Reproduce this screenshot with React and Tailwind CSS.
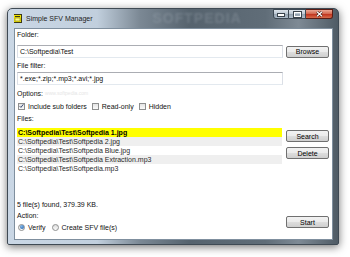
import React from "react";

const files = [
  "C:\\Softpedia\\Test\\Softpedia 1.jpg",
  "C:\\Softpedia\\Test\\Softpedia 2.jpg",
  "C:\\Softpedia\\Test\\Softpedia Blue.jpg",
  "C:\\Softpedia\\Test\\Softpedia Extraction.mp3",
  "C:\\Softpedia\\Test\\Softpedia.mp3",
];

const Btn = ({ children, className = "" }) => (
  <div
    className={
      "h-[12px] w-[43px] flex items-center justify-center rounded-[2px] border border-[#707070] bg-[linear-gradient(180deg,#f2f2f2_0%,#ebebeb_48%,#dddddd_52%,#cfcfcf_100%)] text-[7px] leading-none text-black " +
      className
    }
  >
    {children}
  </div>
);

const Check = ({ checked, label }) => (
  <div className="flex items-center gap-[3px]">
    <div className="w-[7px] h-[7px] border border-[#8e8f8f] bg-[linear-gradient(180deg,#e4e4e4,#fbfbfb)] flex items-center justify-center">
      {checked && (
        <svg width="6" height="6" viewBox="0 0 6 6">
          <path d="M0.8 3.2 L2.3 4.7 L5.2 1" stroke="#2a3d6a" strokeWidth="1.1" fill="none" />
        </svg>
      )}
    </div>
    <span>{label}</span>
  </div>
);

const Radio = ({ checked, label }) => (
  <div className="flex items-center gap-[3px]">
    <div className="w-[7px] h-[7px] rounded-full border border-[#8e8f8f] bg-[linear-gradient(180deg,#dcdcdc,#fbfbfb)] flex items-center justify-center">
      {checked && (
        <div className="w-[4px] h-[4px] rounded-full bg-[radial-gradient(circle_at_40%_35%,#7fb5e8,#1c5aa6)]" />
      )}
    </div>
    <span>{label}</span>
  </div>
);

export default function App() {
  return (
    <div className="w-[350px] h-[257px] bg-white overflow-hidden pt-[8px] pl-[7px] font-['Liberation_Sans',Arial,sans-serif]">
      <div className="w-[332px] h-[237px] rounded-t-[5px] rounded-b-[2px] border border-[#3f4a54] shadow-[0_2px_9px_rgba(0,0,0,0.55)] bg-[linear-gradient(90deg,#cad7e5_0%,#c1cfdd_27%,#7b8894_40%,#56636e_55%,#606d78_78%,#7e8a95_88%,#4f5b65_100%)] flex flex-col pl-[6px] pr-[5px] pb-[4px]">
        {/* title bar */}
        <div className="h-[19px] flex items-start relative overflow-hidden">
          <div className="flex items-center h-[19px] -ml-[1px]">
            <svg width="9" height="9" viewBox="0 0 9 9">
              <rect x="0.5" y="0.5" width="8" height="8" fill="#f2e400" stroke="#3a3a1a" />
              <rect x="2" y="2" width="5" height="1" fill="#3a3a1a" />
              <rect x="2" y="4" width="5" height="3" fill="#fffb80" stroke="#6a6a20" strokeWidth="0.5" />
            </svg>
            <span className="ml-[4px] text-[7px] text-[#1c1c1c] leading-none">Simple SFV Manager</span>
          </div>
          <span className="ml-[60px] mt-[2px] text-[14px] font-bold tracking-[1px] text-[rgba(190,200,210,0.22)] blur-[0.8px] leading-none">
            SOFTPEDIA
          </span>
          <div className="ml-auto flex">
            <div className="w-[16px] h-[10px] rounded-bl-[3px] border border-[#3c4853] bg-[linear-gradient(180deg,#dde4eb_0%,#bcc8d3_45%,#95a3b0_55%,#aebccb_100%)] flex items-end justify-center pb-[2px]">
              <div className="w-[6px] h-[2px] bg-white border border-[#39434c] box-content -mb-[1px]" />
            </div>
            <div className="w-[17px] h-[10px] border-y border-r border-[#3c4853] bg-[linear-gradient(180deg,#dde4eb_0%,#bcc8d3_45%,#95a3b0_55%,#aebccb_100%)] flex items-center justify-center">
              <div className="w-[7px] h-[5px] border border-white outline outline-1 outline-[#39434c]" />
            </div>
            <div className="w-[27px] h-[10px] rounded-br-[3px] border-y border-r border-[#5a1c14] bg-[linear-gradient(180deg,#eaa693_0%,#d46a52_45%,#c2361f_55%,#d66b4b_100%)] flex items-center justify-center">
              <svg width="7" height="6" viewBox="0 0 7 6">
                <path d="M1 0.8 L6 5.2 M6 0.8 L1 5.2" stroke="#39120c" strokeWidth="2.4" />
                <path d="M1 0.8 L6 5.2 M6 0.8 L1 5.2" stroke="#ffffff" strokeWidth="1.3" />
              </svg>
            </div>
          </div>
        </div>

        {/* client area */}
        <div className="flex-1 bg-white border border-[#7f8f9e] pl-[2px] pr-[3px] text-[7px] text-[#111] leading-[9px]">
          <div className="mt-[1px] h-[9px]">Folder:</div>
          <div className="mt-[6px] h-[13px] flex items-center">
            <div className="w-[266px] h-[13px] border border-[#abadb3] border-b-[#e3e9ef] border-x-[#dbdfe6] pl-[2px] flex items-center">
              C:\Softpedia\Test
            </div>
            <Btn className="ml-auto">Browse</Btn>
          </div>

          <div className="mt-[3px] h-[9px]">File filter:</div>
          <div className="mt-[2px] h-[13px] w-[266px] border border-[#abadb3] border-b-[#e3e9ef] border-x-[#dbdfe6] pl-[2px] flex items-center">
            <span>*.exe;*.zip;*.mp3;*.avi;*.jpg</span>
          </div>

          <div className="mt-[4px] h-[9px] flex items-center">
            <span>Options:</span>
            <span className="ml-[2px] text-[5px] text-[#e6e6e6]">www.softpedia.com</span>
          </div>
          <div className="mt-[3px] h-[10px] flex items-center pl-[1px]">
            <Check checked label="Include sub folders" />
            <div className="ml-[5px]">
              <Check label="Read-only" />
            </div>
            <div className="ml-[5px]">
              <Check label="Hidden" />
            </div>
          </div>

          <div className="mt-[3px] h-[9px]">Files:</div>
          <div className="mt-[5px] h-[72px] flex">
            <div className="w-[265px] text-[#2a2a2a]">
              {files.map((f, i) => (
                <div
                  key={i}
                  className={
                    "h-[9px] pl-[1px] flex items-center whitespace-nowrap " +
                    (i === 0
                      ? "bg-[#ffff00] font-bold text-black"
                      : i % 2 === 1
                      ? "bg-[#efefef]"
                      : "bg-white")
                  }
                >
                  {f}
                </div>
              ))}
            </div>
            <div className="ml-auto flex flex-col pt-[2px] gap-[5px]">
              <Btn>Search</Btn>
              <Btn>Delete</Btn>
            </div>
          </div>

          <div className="flex">
            <div className="flex flex-col">
              <div className="h-[9px]">5 file(s) found, 379.39 KB.</div>
              <div className="mt-[2px] h-[9px]">Action:</div>
              <div className="mt-[2px] h-[10px] flex items-center pl-[1px]">
                <Radio checked label="Verify" />
                <div className="ml-[6px]">
                  <Radio label="Create SFV file(s)" />
                </div>
              </div>
            </div>
            <Btn className="ml-auto mt-[16px]">Start</Btn>
          </div>
        </div>
      </div>
    </div>
  );
}
